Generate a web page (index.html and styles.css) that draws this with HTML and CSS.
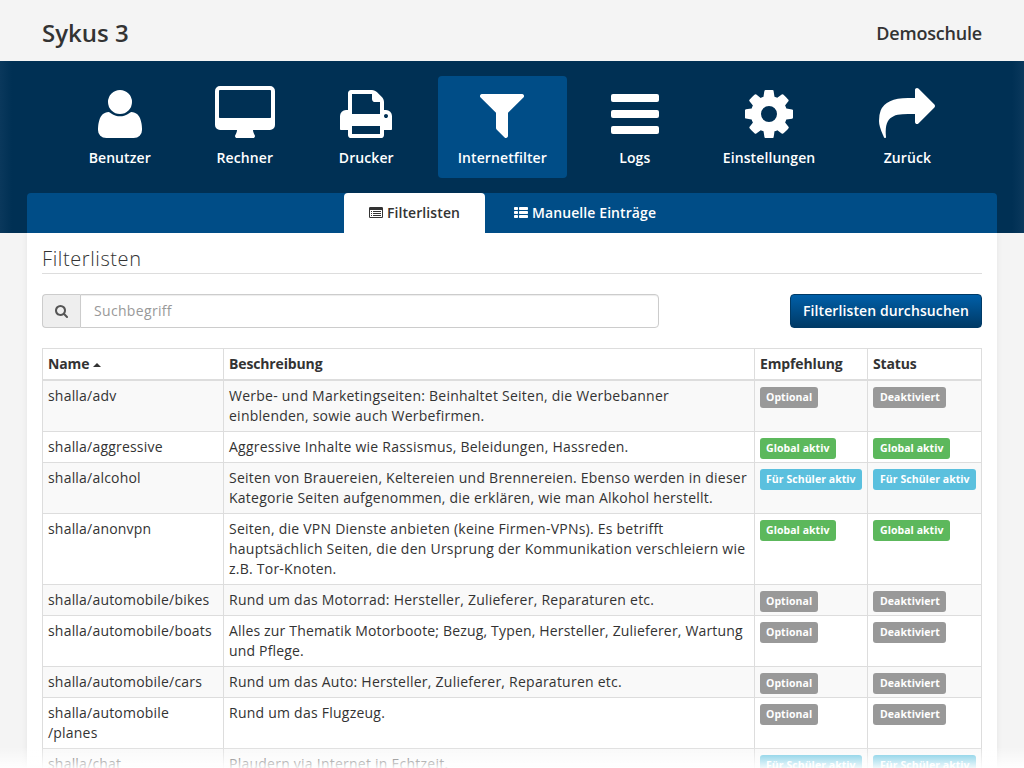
FILE: index.html
```html
<!DOCTYPE html>
<html lang="de">
<head>
<meta charset="utf-8">
<title>Sykus 3</title>
<link rel="stylesheet" href="styles.css">
</head>
<body>
<header class="top">
  <div class="brand">Sykus 3</div>
  <div class="school">Demoschule</div>
</header>
<div class="band">
  <nav class="main-nav">
    <a class="item"><svg width="44" height="56" viewBox="0 0 1408 1792"><path transform="translate(-192 0)" d="M1600 1405q0 120-73 189.500t-194 69.500h-874q-121 0-194-69.500t-73-189.500q0-53 3.500-103.500t14-109 26.500-108.500 43-97.500 62-81 85.500-53.500 111.500-20q9 0 42 21.500t74.500 48 108 48 133.500 21.500 133.500-21.500 108-48 74.500-48 42-21.500q61 0 111.500 20t85.500 53.500 62 81 43 97.500 26.500 108.500 14 109 3.500 103.500zm-320-893q0 159-112.500 271.500t-271.500 112.500-271.500-112.500-112.500-271.500 112.500-271.500 271.500-112.500 271.500 112.500 112.500 271.500z"/></svg><span>Benutzer</span></a>
    <a class="item"><svg width="60" height="56" viewBox="0 0 1920 1792"><path d="M1792 992v-832q0-13-9.500-22.500t-22.500-9.500h-1600q-13 0-22.500 9.500t-9.500 22.500v832q0 13 9.500 22.500t22.500 9.500h1600q13 0 22.500-9.500t9.500-22.500zm128-832v1088q0 66-47 113t-113 47h-544q0 37 16 77.500t32 71 16 43.500q0 26-19 45t-45 19h-512q-26 0-45-19t-19-45q0-14 16-44t32-70 16-78h-544q-66 0-113-47t-47-113v-1088q0-66 47-113t113-47h1600q66 0 113 47t47 113z"/></svg><span>Rechner</span></a>
    <a class="item"><svg width="52" height="56" viewBox="0 0 1664 1792"><path d="M384 1536h896v-256h-896v256zm0-640h896v-384h-160q-40 0-68-28t-28-68v-160h-640v640zm1152 64q0-26-19-45t-45-19-45 19-19 45 19 45 45 19 45-19 19-45zm128 0v416q0 13-9.500 22.500t-22.500 9.500h-224v160q0 40-28 68t-68 28h-960q-40 0-68-28t-28-68v-160h-224q-13 0-22.500-9.500t-9.500-22.500v-416q0-79 56.500-135.500t135.500-56.500h64v-544q0-40 28-68t68-28h672q40 0 88 20t76 48l152 152q28 28 48 76t20 88v256h64q79 0 135.500 56.500t56.500 135.500z"/></svg><span>Drucker</span></a>
    <a class="item active"><svg width="44" height="56" viewBox="0 0 1408 1792"><path d="M1403 295q17 41-14 70l-493 493v742q0 42-39 59-13 5-25 5-27 0-45-19l-256-256q-19-19-19-45v-486l-493-493q-31-29-14-70 17-39 59-39h1280q42 0 59 39z"/></svg><span>Internetfilter</span></a>
    <a class="item"><svg width="48" height="56" viewBox="0 0 1536 1792"><rect y="256" width="1536" height="256" rx="64"/><rect y="768" width="1536" height="256" rx="64"/><rect y="1280" width="1536" height="256" rx="64"/></svg><span>Logs</span></a>
    <a class="item"><svg width="48" height="56" viewBox="0 0 1536 1792"><path d="M1024 896q0-106-75-181t-181-75-181 75-75 181 75 181 181 75 181-75 75-181zm512-109v222q0 12-8 23t-20 13l-185 28q-19 54-39 91 35 50 107 138 10 12 10 25t-9 23q-27 37-99 108t-94 71q-12 0-26-9l-138-108q-44 23-91 38-16 136-29 186-7 28-36 28h-222q-14 0-24.500-8.500t-11.500-21.500l-28-184q-49-16-90-37l-141 107q-10 9-25 9-14 0-25-11-126-114-165-168-7-10-7-23 0-12 8-23 15-21 51-66.500t54-70.500q-27-50-41-99l-183-27q-13-2-21-12.500t-8-23.500v-222q0-12 8-23t19-13l186-28q14-46 39-92-40-57-107-138-10-12-10-24 0-10 9-23 26-36 98.500-107.500t94.500-71.500q13 0 26 10l138 107q44-23 91-38 16-136 29-186 7-28 36-28h222q14 0 24.500 8.500t11.500 21.500l28 184q49 16 90 37l142-107q9-9 24-9 13 0 25 10 129 119 165 170 7 8 7 22 0 12-8 23-15 21-51 66.500t-54 70.500q26 50 41 98l183 28q13 2 21 12.500t8 23.500z"/></svg><span>Einstellungen</span></a>
    <a class="item"><svg width="56" height="56" viewBox="0 0 1792 1792"><path d="M1792 640q0 26-19 45l-512 512q-19 19-45 19t-45-19-19-45v-256h-224q-98 0-175.500 6t-154 21.500-133 42.500-105.500 69.500-80 101-48.500 138.500-17.500 181q0 55 5 123 0 6 2.500 23.500t2.500 26.500q0 15-8.500 25t-23.500 10q-16 0-28-17-7-9-13-22t-13.500-30-10.500-24q-127-285-127-451 0-199 53-333 162-403 875-403h224v-256q0-26 19-45t45-19 45 19l512 512q19 19 19 45z"/></svg><span>Zurück</span></a>
  </nav>
  <nav class="tabs">
    <a class="tab active"><svg width="14" height="14" viewBox="0 0 1792 1792"><path fill-rule="evenodd" d="M160 128h1472q160 0 160 160v1088q0 160-160 160h-1472q-160 0-160-160v-1088q0-160 160-160zM160 512q-32 0-32 32v832q0 32 32 32h1472q32 0 32-32v-832q0-32-32-32z"/><path d="M256 640h128v128h-128zM256 896h128v128h-128zM256 1152h128v128h-128zM512 640h1024v128h-1024zM512 896h1024v128h-1024zM512 1152h1024v128h-1024z"/></svg><span>Filterlisten</span></a>
    <a class="tab"><svg width="14" height="14" viewBox="0 0 1792 1792"><rect y="128" width="512" height="384" rx="96"/><rect y="640" width="512" height="384" rx="96"/><rect y="1152" width="512" height="384" rx="96"/><rect x="640" y="128" width="1152" height="384" rx="96"/><rect x="640" y="640" width="1152" height="384" rx="96"/><rect x="640" y="1152" width="1152" height="384" rx="96"/></svg><span>Manuelle Einträge</span></a>
  </nav>
</div>
<main class="content">
  <h1>Filterlisten</h1>
  <div class="toolbar">
    <div class="search">
      <span class="addon"><svg width="13" height="14" viewBox="0 0 1664 1792"><path d="M1152 832q0-185-131.500-316.500t-316.500-131.500-316.500 131.500-131.500 316.500 131.500 316.500 316.500 131.500 316.500-131.500 131.500-316.500zm512 832q0 52-38 90t-90 38q-54 0-90-38l-343-342q-179 124-399 124-143 0-273.500-55.500t-225-150-150-225-55.500-273.500 55.500-273.500 150-225 225-150 273.500-55.500 273.500 55.500 225 150 150 225 55.500 273.500q0 220-124 399l343 343q37 37 37 90z"/></svg></span>
      <input type="text" placeholder="Suchbegriff">
    </div>
    <button class="btn">Filterlisten durchsuchen</button>
  </div>
  <table>
    <colgroup><col class="c-name"><col class="c-desc"><col class="c-rec"><col class="c-status"></colgroup>
    <thead><tr><th>Name <i class="caret"></i></th><th>Beschreibung</th><th>Empfehlung</th><th>Status</th></tr></thead>
    <tbody>
      <tr><td>shalla/adv</td><td>Werbe- und Marketingseiten: Beinhaltet Seiten, die Werbebanner einblenden, sowie auch Werbefirmen.</td><td><span class="label">Optional</span></td><td><span class="label">Deaktiviert</span></td></tr>
      <tr><td>shalla/aggressive</td><td>Aggressive Inhalte wie Rassismus, Beleidungen, Hassreden.</td><td><span class="label green">Global aktiv</span></td><td><span class="label green">Global aktiv</span></td></tr>
      <tr><td>shalla/alcohol</td><td>Seiten von Brauereien, Keltereien und Brennereien. Ebenso werden in dieser Kategorie Seiten aufgenommen, die erklären, wie man Alkohol herstellt.</td><td><span class="label blue">Für Schüler aktiv</span></td><td><span class="label blue">Für Schüler aktiv</span></td></tr>
      <tr><td>shalla/anonvpn</td><td>Seiten, die VPN Dienste anbieten (keine Firmen-VPNs). Es betrifft hauptsächlich Seiten, die den Ursprung der Kommunikation verschleiern wie z.B. Tor-Knoten.</td><td><span class="label green">Global aktiv</span></td><td><span class="label green">Global aktiv</span></td></tr>
      <tr><td>shalla/automobile/bikes</td><td>Rund um das Motorrad: Hersteller, Zulieferer, Reparaturen etc.</td><td><span class="label">Optional</span></td><td><span class="label">Deaktiviert</span></td></tr>
      <tr class="tight"><td>shalla/automobile/boats</td><td>Alles zur Thematik Motorboote; Bezug, Typen, Hersteller, Zulieferer, Wartung und Pflege.</td><td><span class="label">Optional</span></td><td><span class="label">Deaktiviert</span></td></tr>
      <tr><td>shalla/automobile/cars</td><td>Rund um das Auto: Hersteller, Zulieferer, Reparaturen etc.</td><td><span class="label">Optional</span></td><td><span class="label">Deaktiviert</span></td></tr>
      <tr><td>shalla/automobile<br>/planes</td><td>Rund um das Flugzeug.</td><td><span class="label">Optional</span></td><td><span class="label">Deaktiviert</span></td></tr>
      <tr><td>shalla/chat</td><td>Plaudern via Internet in Echtzeit.</td><td><span class="label blue">Für Schüler aktiv</span></td><td><span class="label blue">Für Schüler aktiv</span></td></tr>
    </tbody>
  </table>
</main>
<div class="fade"></div>
</body>
</html>
```
FILE: styles.css
```css
* { box-sizing: border-box; }
html, body { height: 100%; overflow: hidden; }
body {
  margin: 0;
  display: flex;
  flex-direction: column;
  background: #f4f4f4;
  color: #333;
  font: 14px/20px "Open Sans", sans-serif;
}
svg { display: block; fill: currentColor; }
.top {
  flex: none;
  height: 61px;
  padding: 5px 42px 0;
  display: flex;
  align-items: center;
  justify-content: space-between;
  font-weight: 600;
}
.brand { font-size: 24px; }
.school { font-size: 18px; letter-spacing: -.2px; }
.band {
  flex: none;
  height: 172px;
  padding: 15px 27px 0;
  background: linear-gradient(90deg, #0a385c 0, #003054 12px, #003054 1012px, #0a385c 1024px);
  color: #fff;
  font-weight: 600;
  letter-spacing: .09px;
}
.main-nav { display: flex; justify-content: center; gap: 24px; }
.item {
  height: 102px;
  padding: 10px 20px;
  display: flex;
  flex-direction: column;
  align-items: center;
  gap: 6px;
  border-radius: 4px;
}
.item.active { background: #004d87; }
.tabs {
  height: 40px;
  margin-top: 15px;
  padding-left: 1px;
  display: flex;
  justify-content: center;
  gap: 4px;
  background: #004d87;
  border-radius: 4px 4px 0 0;
}
.tab {
  padding: 0 25px;
  display: flex;
  align-items: center;
  gap: 4px;
  border-radius: 4px 4px 0 0;
}
.tab.active { background: #fff; color: #333; }
.content {
  flex: 1;
  min-height: 0;
  margin: 0 27px;
  padding: 15px 15px 0;
  background: #fff;
  box-shadow: 0 0 6px rgba(0, 0, 0, .07);
  clip-path: inset(0 -10px);
}
h1 {
  height: 26px;
  margin: 0 0 20px;
  border-bottom: 1px solid #ddd;
  font-size: 20px;
  line-height: 22px;
  font-weight: 300;
  letter-spacing: .6px;
}
.toolbar { display: flex; justify-content: space-between; margin-bottom: 20px; }
.search { display: flex; width: 617px; height: 34px; }
.addon {
  width: 38px;
  padding-bottom: 1px;
  display: flex;
  align-items: center;
  justify-content: center;
  background: #eee;
  border: 1px solid #ccc;
  border-right: 0;
  border-radius: 4px 0 0 4px;
  color: #555;
}
.search input {
  flex: 1;
  padding: 0 13px;
  border: 1px solid #ccc;
  border-radius: 0 4px 4px 0;
  box-shadow: inset 0 1px 1px rgba(0, 0, 0, .075);
  font: inherit;
  letter-spacing: .33px;
}
.search input::placeholder { color: #999; }
.btn {
  height: 34px;
  width: 192px;
  padding: 0;
  white-space: nowrap;
  border: 1px solid #003a66;
  border-radius: 4px;
  background: linear-gradient(#005fa8, #003a66);
  color: #fff;
  font: 600 14px/20px "Open Sans", sans-serif;
  letter-spacing: .1px;
}
table { width: 939px; table-layout: fixed; border-collapse: collapse; }
.c-name { width: 181px; }
.c-desc { width: 531px; }
.c-rec { width: 113px; }
.c-status { width: 114px; }
th, td { padding: 5px; border: 1px solid #ddd; text-align: left; vertical-align: top; }
th { border-bottom-width: 2px; font-weight: 700; letter-spacing: -.14px; }
td:nth-child(1) { letter-spacing: .2px; }
td:nth-child(2) { letter-spacing: .24px; }
.tight td:nth-child(2) { letter-spacing: .17px; }
tbody tr:nth-child(odd) { background: #f9f9f9; }
.caret {
  display: inline-block;
  vertical-align: 2px;
  border: 4px solid transparent;
  border-width: 0 4.5px 4.5px;
  border-bottom-color: #333;
}
.label {
  padding: 3px 6px 4px;
  border-radius: 3px;
  background: #999;
  color: #fff;
  font-size: 10.5px;
  line-height: 1;
  font-weight: 700;
  letter-spacing: .06px;
  white-space: nowrap;
}
td:nth-child(4) .label { padding-left: 7px; }
.green { background: #5cb85c; }
.blue { background: #5bc0de; }
.fade {
  position: fixed;
  inset: auto 0 0;
  height: 20px;
  background: linear-gradient(rgba(255, 255, 255, .1), rgba(255, 255, 255, .9));
}
```
